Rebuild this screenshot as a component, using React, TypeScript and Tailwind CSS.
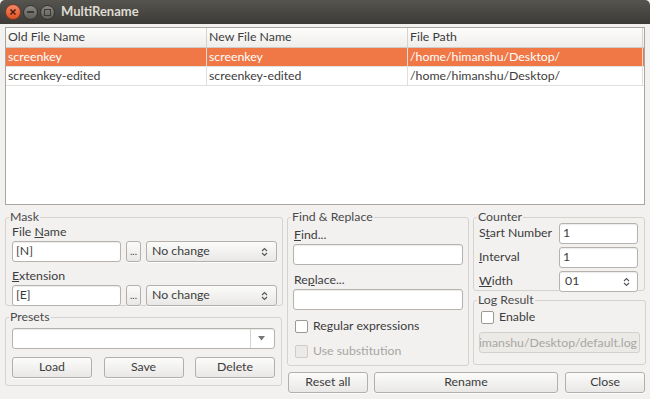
import React from 'react';

const inputCls =
  'h-[21px] bg-white border border-[#b6b3ae] rounded-[3px] shadow-[inset_0_1px_1px_rgba(0,0,0,0.08)] px-[3px] flex items-center text-[#3c3c3c]';
const btnBase =
  'h-[21px] border border-[#b3b0ab] rounded-[3px] bg-gradient-to-b from-[#fbfbfa] to-[#e9e8e6] flex items-center text-[#3c3c3c] shadow-[0_1px_0_rgba(255,255,255,0.8)]';
const btnCls = `${btnBase} justify-center`;

function Spin() {
  return (
    <svg width="7" height="10" viewBox="0 0 7 10" className="shrink-0">
      <path d="M1 4 L3.5 1.5 L6 4" fill="none" stroke="#555" strokeWidth="1.1" />
      <path d="M1 6 L3.5 8.5 L6 6" fill="none" stroke="#555" strokeWidth="1.1" />
    </svg>
  );
}

function Combo({ text, className }: { text: string; className: string }) {
  return (
    <div className={`${btnBase} justify-between pl-[5px] pr-[8px] ${className}`}>
      <span>{text}</span>
      <Spin />
    </div>
  );
}

function Check({ label, disabled }: { label: string; disabled?: boolean }) {
  return (
    <div className="flex items-center gap-[5px]">
      <div
        className={`w-[13px] h-[13px] rounded-[2px] border ${
          disabled ? 'border-[#cfccc8] bg-[#ebeae8]' : 'border-[#9c9994] bg-white'
        }`}
      />
      <span className={disabled ? 'text-[#a8a6a2]' : 'text-[#3c3c3c]'}>{label}</span>
    </div>
  );
}

function Group({ title, className, children }: { title: string; className: string; children: React.ReactNode }) {
  return (
    <fieldset className={`border border-[#d5d3cf] rounded-[3px] px-[5px] ${className}`}>
      <legend className="leading-[16px] text-[#4a4a4a] ml-[-2px] px-[1px]">{title}</legend>
      {children}
    </fieldset>
  );
}

export default function App() {
  const rows = [
    ['screenkey', 'screenkey', '/home/himanshu/Desktop/'],
    ['screenkey-edited', 'screenkey-edited', '/home/himanshu/Desktop/'],
  ];

  return (
    <div className="w-[650px] h-[399px] bg-[#f2f1f0] flex flex-col font-['Lato','Open_Sans',sans-serif] text-[12.3px] text-[#3c3c3c] overflow-hidden">
      {/* title bar */}
      <div className="h-[24px] shrink-0 bg-gradient-to-b from-[#55544f] to-[#3c3b37] rounded-t-[5px] flex items-center pl-[5px]">
        <div className="w-[16px] h-[16px] rounded-full bg-gradient-to-b from-[#f48766] to-[#e0501f] border border-[#803a22] flex items-center justify-center">
          <svg width="8" height="8" viewBox="0 0 8 8">
            <path d="M1.5 1.5 L6.5 6.5 M6.5 1.5 L1.5 6.5" stroke="#4a1d0e" strokeWidth="1.5" />
          </svg>
        </div>
        <div className="w-[15px] h-[15px] ml-[2px] rounded-full bg-gradient-to-b from-[#8a8883] to-[#5e5d58] border border-[#33322f] flex items-center justify-center">
          <div className="w-[7px] h-[2px] bg-[#3a3935]" />
        </div>
        <div className="w-[15px] h-[15px] ml-[2px] rounded-full bg-gradient-to-b from-[#8a8883] to-[#5e5d58] border border-[#33322f] flex items-center justify-center">
          <div className="w-[7px] h-[7px] border-[1.5px] border-[#3a3935]" />
        </div>
        <span className="ml-[6px] font-bold text-[#dfdbd2] text-[13px]">MultiRename</span>
      </div>

      <div className="flex-1 flex flex-col px-[5px] pt-[3px]">
        {/* table */}
        <div className="h-[178px] shrink-0 bg-white border border-[#a9a6a1] flex flex-col">
          <div className="h-[20px] flex bg-gradient-to-b from-[#fdfdfc] to-[#efeeec] border-b border-[#cfccc8]">
            <div className="w-[201px] border-r border-[#d6d3cf] pl-[2px] flex items-center">Old File Name</div>
            <div className="w-[201px] border-r border-[#d6d3cf] pl-[2px] flex items-center">New File Name</div>
            <div className="flex-1 pl-[2px] flex items-center border-r border-[#d6d3cf] mr-[1px]">File Path</div>
          </div>
          {rows.map((r, i) => (
            <div
              key={i}
              className={`h-[19px] flex ${i === 0 ? 'bg-[#f07746] text-white' : 'text-[#3c3c3c]'} border-b border-[#e2e0dd]`}
            >
              <div className="w-[201px] border-r border-[#e0dedb] pl-[2px] flex items-center">{r[0]}</div>
              <div className="w-[201px] border-r border-[#e0dedb] pl-[2px] flex items-center">{r[1]}</div>
              <div className="flex-1 pl-[2px] flex items-center border-r border-[#e0dedb] mr-[1px]">{r[2]}</div>
            </div>
          ))}
        </div>

        {/* bottom panels */}
        <div className="flex gap-[5px] mt-[4px]">
          {/* left column */}
          <div className="w-[277px] flex flex-col gap-[3px]">
            <Group title="Mask" className="h-[97px]">
              <div className="leading-[16px] mt-[-1px] pl-[1px]">
                File <span className="underline">N</span>ame
              </div>
              <div className="flex items-center mt-[1px] pl-[1px]">
                <div className={`${inputCls} w-[109px]`}>[N]</div>
                <div className={`${btnCls} w-[15px] ml-[5px] text-[10px]`}>...</div>
                <Combo text="No change" className="w-[131px] ml-[5px]" />
              </div>
              <div className="leading-[16px] mt-[6px] pl-[1px]">
                <span className="underline">E</span>xtension
              </div>
              <div className="flex items-center mt-[1px] pl-[1px]">
                <div className={`${inputCls} w-[109px]`}>[E]</div>
                <div className={`${btnCls} w-[15px] ml-[5px] text-[10px]`}>...</div>
                <Combo text="No change" className="w-[131px] ml-[5px]" />
              </div>
            </Group>
            <Group title="Presets" className="h-[77px]">
              <div className={`${inputCls} ml-[1px] mt-[3px] w-[263px] px-0 justify-end`}>
                <div className="h-full w-[21px] border-l border-[#d6d3cf] flex items-center justify-center">
                  <svg width="7" height="5" viewBox="0 0 7 5">
                    <path d="M0 0 L7 0 L3.5 4.5 Z" fill="#777" />
                  </svg>
                </div>
              </div>
              <div className="flex justify-between ml-[1px] w-[263px] mt-[8px]">
                <div className={`${btnCls} w-[80px]`}>Load</div>
                <div className={`${btnCls} w-[80px]`}>Save</div>
                <div className={`${btnCls} w-[80px]`}>Delete</div>
              </div>
            </Group>
          </div>

          {/* middle column */}
          <div className="w-[181px] flex flex-col">
            <Group title="Find & Replace" className="h-[157px]">
              <div className="leading-[16px] mt-[2px] pl-[1px]">
                <span className="underline">F</span>ind...
              </div>
              <div className={`${inputCls} w-[170px] mt-[1px]`} />
              <div className="leading-[16px] mt-[7px] pl-[1px]">
                Re<span className="underline">p</span>lace...
              </div>
              <div className={`${inputCls} w-[170px] mt-[1px]`} />
              <div className="mt-[7px] pl-[2px]">
                <Check label="Regular expressions" />
              </div>
              <div className="mt-[7px] pl-[2px]">
                <Check label="Use substitution" disabled />
              </div>
            </Group>
            <div className="flex mt-[6px] gap-[6px] w-[357px] ml-[1px]">
              <div className={`${btnCls} w-[80px]`}>Reset all</div>
              <div className={`${btnCls} w-[185px]`}>Rename</div>
              <div className={`${btnCls} w-[80px] ml-[1px]`}>Close</div>
            </div>
          </div>

          {/* right column */}
          <div className="w-[172px] flex flex-col gap-[1px]">
            <Group title="Counter" className="h-[82px]">
              <div className="flex items-center justify-between mt-[-2px]">
                <span>
                  S<span className="underline">t</span>art Number
                </span>
                <div className={`${inputCls} w-[79px] mr-[1px]`}>1</div>
              </div>
              <div className="flex items-center justify-between mt-[3px]">
                <span>
                  <span className="underline">I</span>nterval
                </span>
                <div className={`${inputCls} w-[79px] mr-[1px]`}>1</div>
              </div>
              <div className="flex items-center justify-between mt-[3px]">
                <span>
                  <span className="underline">W</span>idth
                </span>
                <div className={`${inputCls} w-[79px] mr-[1px] justify-between pr-[7px] pl-[5px]`}>
                  <span>01</span>
                  <Spin />
                </div>
              </div>
            </Group>
            <Group title="Log Result" className="h-[73px]">
              <div className="pl-[2px] mt-[0px]">
                <Check label="Enable" />
              </div>
              <div className="mt-[6px] h-[21px] w-[161px] bg-[#eceae7] border border-[#d3d0cc] rounded-[3px] flex justify-end items-center overflow-hidden pr-[2px] whitespace-nowrap text-[#a9a7a3]">
                <span className="shrink-0">/home/himanshu/Desktop/default.log</span>
              </div>
            </Group>
          </div>
        </div>
      </div>
    </div>
  );
}
